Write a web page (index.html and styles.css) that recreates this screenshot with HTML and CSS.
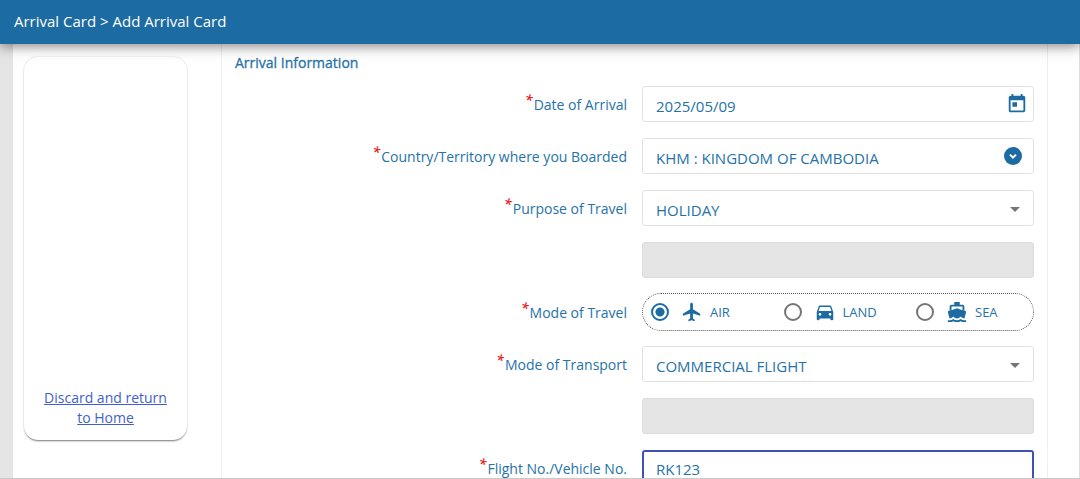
FILE: index.html
```html
<!DOCTYPE html>
<html lang="en">
<head>
  <meta charset="UTF-8">
  <meta name="viewport" content="width=device-width, initial-scale=1.0">
  <title>Add Arrival Card</title>
  <link rel="stylesheet" href="styles.css">
</head>
<body>
  <header class="topbar">Arrival Card &gt; Add Arrival Card</header>

  <div class="page">
    <aside class="side-card">
      <a href="#">Discard and return to Home</a>
    </aside>

    <main class="panel">
      <h2>Arrival Information</h2>

      <form class="arrival-form">
        <div class="row">
          <label for="arrival-date"><span class="required">*</span>Date of Arrival</label>
          <div class="field">
            <input type="text" id="arrival-date" value="2025/05/09">
            <button type="button" class="field-button calendar" aria-label="Open calendar">
              <svg viewBox="0 0 24 24" width="22" height="22"><path d="M19 3h-1V1h-2v2H8V1H6v2H5c-1.100 0-2 .9-2 2v14c0 1.100.9 2 2 2h14c1.100 0 2-.9 2-2V5c0-1.100-.9-2-2-2zm0 16H5V8h14v11zM7 10h5v5H7z"/></svg>
            </button>
          </div>
        </div>

        <div class="row">
          <label for="country"><span class="required">*</span>Country/Territory where you Boarded</label>
          <div class="field">
            <input type="text" id="country" value="KHM : KINGDOM OF CAMBODIA">
            <button type="button" class="field-button list" aria-label="Show countries">
              <svg viewBox="0 0 18 18" width="18" height="18"><circle cx="9" cy="9" r="9"/><path class="chevron" d="M6 7.600l3 3 3-3"/></svg>
            </button>
          </div>
        </div>

        <div class="row">
          <label for="purpose"><span class="required">*</span>Purpose of Travel</label>
          <div class="field">
            <select id="purpose"><option>HOLIDAY</option></select>
            <svg class="arrow" viewBox="0 0 10 5" width="10" height="5"><path d="M0 0h10L5 5z"/></svg>
          </div>
        </div>

        <div class="row">
          <div class="field second"><input type="text" aria-label="Other purpose of travel" disabled></div>
        </div>

        <div class="row">
          <span class="label" id="mode-label"><span class="required">*</span>Mode of Travel</span>
          <div class="modes" role="radiogroup" aria-labelledby="mode-label">
            <label class="mode">
              <input type="radio" name="mode" checked>
              <svg viewBox="0 0 24 24" width="22" height="22"><path d="M21 16v-2l-8-5V3.500c0-.83-.67-1.500-1.500-1.500S10 2.670 10 3.500V9l-8 5v2l8-2.500V19l-2 1.500V22l3.500-1 3.500 1v-1.500L13 19v-5.500l8 2.500z"/></svg>
              AIR
            </label>
            <label class="mode">
              <input type="radio" name="mode">
              <svg viewBox="0 0 24 24" width="22" height="22"><path d="M18.920 6.010C18.720 5.420 18.160 5 17.500 5h-11c-.66 0-1.210.42-1.420 1.010L3 12v8c0 .55.45 1 1 1h1c.55 0 1-.45 1-1v-1h12v1c0 .55.45 1 1 1h1c.55 0 1-.45 1-1v-8l-2.080-5.990zM6.500 16c-.83 0-1.500-.67-1.500-1.500S5.670 13 6.500 13s1.500.67 1.500 1.500S7.330 16 6.500 16zm11 0c-.83 0-1.500-.67-1.500-1.500s.67-1.500 1.500-1.500 1.500.67 1.500 1.500-.67 1.500-1.500 1.500zM5 11l1.500-4.500h11L19 11H5z"/></svg>
              LAND
            </label>
            <label class="mode">
              <input type="radio" name="mode">
              <svg viewBox="0 0 24 24" width="22" height="22"><path d="M20 21c-1.390 0-2.780-.47-4-1.320-2.440 1.710-5.560 1.710-8 0C6.780 20.530 5.390 21 4 21H2v2h2c1.380 0 2.740-.35 4-.99 2.520 1.290 5.480 1.290 8 0 1.260.65 2.620.99 4 .99h2v-2h-2zM3.950 19H4c1.600 0 3.020-.88 4-2 .98 1.120 2.400 2 4 2s3.020-.88 4-2c.98 1.120 2.400 2 4 2h.05l1.890-6.680c.08-.26.06-.54-.06-.78s-.34-.42-.6-.5L20 10.620V6c0-1.100-.9-2-2-2h-3V1H9v3H6c-1.100 0-2 .9-2 2v4.620l-1.290.42c-.26.08-.48.26-.6.5s-.15.520-.06.780L3.950 19zM6 6h12v3.970L12 8 6 9.970V6z"/></svg>
              SEA
            </label>
          </div>
        </div>

        <div class="row">
          <label for="transport"><span class="required">*</span>Mode of Transport</label>
          <div class="field">
            <select id="transport"><option>COMMERCIAL FLIGHT</option></select>
            <svg class="arrow" viewBox="0 0 10 5" width="10" height="5"><path d="M0 0h10L5 5z"/></svg>
          </div>
        </div>

        <div class="row">
          <div class="field second"><input type="text" aria-label="Other mode of transport" disabled></div>
        </div>

        <div class="row">
          <label for="flight"><span class="required">*</span>Flight No./Vehicle No.</label>
          <div class="field"><input type="text" id="flight" class="active" value="RK123"></div>
        </div>
      </form>
    </main>
  </div>
</body>
</html>
```

FILE: styles.css
```css
* { margin: 0; padding: 0; box-sizing: border-box; }

body {
  display: flex;
  flex-direction: column;
  height: 100vh;
  overflow: hidden;
  background: #e5e5e5;
  border-bottom: 1px solid #c8c8c8;
  color: #2672a8;
  font-family: "Open Sans", sans-serif;
  font-size: 14px;
  line-height: 20px;
}

.topbar {
  position: relative;
  z-index: 1;
  flex: none;
  padding: 11px 14px 13px;
  background: #1c6ba3;
  box-shadow: 0 2px 12px rgba(0,0,0,0.5);
  color: white;
  font-size: 15px;
}

.page {
  display: flex;
  flex: 1;
  align-items: flex-start;
  gap: 34px;
  min-height: 0;
  margin-left: 13px;
  padding: 0 31px 0 11px;
  overflow: hidden;
  background: white;
  border-right: 1px solid #ddd;
}

.side-card {
  display: flex;
  align-items: flex-end;
  flex: none;
  width: 163px;
  height: 383px;
  margin-top: 13px;
  padding: 12px;
  border-radius: 14px;
  box-shadow: 0 2px 2px -1px rgba(0,0,0,0.5), 0 0 2px rgba(0,0,0,0.2);
  text-align: center;
}
.side-card a { color: #3f5fcb; }

.panel {
  flex: 1;
  padding: 9px 13px;
  border: solid #eee;
  border-width: 0 1px;
}
.panel h2 {
  font-size: 14px;
  line-height: 20px;
  font-weight: normal;
  -webkit-text-stroke: thin #2672a8;
}

.arrival-form { padding-top: 5px; }

.row {
  display: grid;
  grid-template-columns: 1fr 1fr;
  column-gap: 15px;
  align-items: center;
  height: 52px;
}
.row > label, .label { text-align: right; }
.required {
  margin-right: 1px;
  color: #e8201e;
  font-style: italic;
  font-weight: 600;
  line-height: 1;
  vertical-align: 5px;
}

.field { position: relative; }
.second { grid-column: 2; }

.field input, .field select {
  display: block;
  width: 100%;
  height: 36px;
  padding: 3px 40px 0 13px;
  border: 1px solid #e2e2e2;
  border-radius: 3px;
  background: white;
  color: #2672a8;
  font: inherit;
  font-size: 15px;
  appearance: none;
  outline: none;
}
.field input:disabled { background: #e5e5e5; border-color: #dcdcdc; }
.field input.active { border: 2px solid #3f51b5; padding: 2px 12px 0; }

.field-button {
  position: absolute;
  top: 0;
  bottom: 0;
  border: none;
  background: none;
  cursor: pointer;
}
.calendar { right: 6px; }
.list { right: 12px; }

svg { display: block; flex: none; fill: #1c6ba3; }
.chevron { fill: none; stroke: white; stroke-width: 2; }
.arrow {
  position: absolute;
  right: 14px;
  top: 17px;
  fill: #757575;
  pointer-events: none;
}

.modes {
  display: grid;
  grid-template-columns: 1fr 1fr 117px;
  align-items: center;
  height: 38px;
  padding-left: 8px;
  border: 1px dotted #555;
  border-radius: 19px;
}
.mode { display: flex; align-items: center; font-size: 13px; }
.mode svg { margin: 0 7px 0 12px; }
.mode input {
  width: 18px;
  height: 18px;
  border: 2px solid #757575;
  border-radius: 50%;
  appearance: none;
}
.mode input:checked {
  border-color: #1c6ba3;
  background: radial-gradient(#1c6ba3 4px, transparent 5px);
}
```
